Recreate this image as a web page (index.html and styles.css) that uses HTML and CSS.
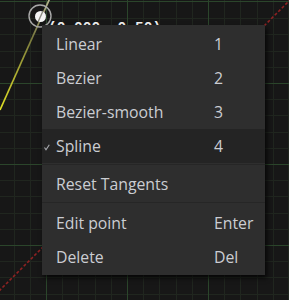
FILE: index.html
```html
<!DOCTYPE html>
<html lang="en">
<head>
	<meta charset="UTF-8">
	<title>Curve point menu</title>
<link rel="stylesheet" href="styles.css">
</head>
<body>
	<div class="editor">
		<svg class="graph" width="289" height="300" viewBox="0 0 289 300">
			<defs>
				<linearGradient id="curve" x1="0" y1="0" x2="0" y2="1">
					<stop offset="0" stop-color="#b8b890"/>
					<stop offset="0.35" stop-color="#7a7a40"/>
					<stop offset="1" stop-color="#e2e224"/>
				</linearGradient>
			</defs>
			<!-- minor grid -->
			<path class="grid_minor" d="M14.5 0V300M30.5 0V300M62.5 0V300M78.5 0V300M95.5 0V300M111.5 0V300M143.5 0V300M159.5 0V300M176.5 0V300M192.5 0V300M224.5 0V300M240.5 0V300M257.5 0V300M273.5 0V300M288.5 0V300
				M0 18.5H289M0 34.5H289M0 51.5H289M0 67.5H289M0 99.5H289M0 115.5H289M0 132.5H289M0 148.5H289M0 180.5H289M0 196.5H289M0 213.5H289M0 229.5H289M0 261.5H289M0 277.5H289M0 294.5H289"/>
			<!-- major grid -->
			<path class="grid_major" d="M46.5 0V300M127.5 0V300M208.5 0V300M0 1.5H289M0 83.5H289M0 164.5H289M0 245.5H289"/>

			<path class="dashed" d="M291 -1L-1 291"/>
			<path class="curve" d="M50 -2L0 110" stroke="url(#curve)"/>

			<circle class="ring" cx="40" cy="16" r="11"/>
			<circle class="dot" cx="40.5" cy="16.5" r="5.5"/>
			<path class="dot_line" d="M43 11L38 22"/>
		</svg>

		<!-- point value, mostly hidden under the menu -->
		<div class="coords_clip"><span class="coords">(0.000, 0.50)</span></div>

		<ul class="menu">
			<li class="item"><span class="label">Linear</span><span class="key">1</span></li>
			<li class="item"><span class="label">Bezier</span><span class="key">2</span></li>
			<li class="item"><span class="label">Bezier-smooth</span><span class="key">3</span></li>
			<li class="item active">
				<svg class="check" width="6" height="7" viewBox="0 0 6 7"><path d="M0.5 3.5L2 5.8L5.3 0.8"/></svg>
				<span class="label">Spline</span><span class="key">4</span>
			</li>
			<li class="sep"></li>
			<li class="item"><span class="label">Reset Tangents</span><span class="key"></span></li>
			<li class="sep sep_low"></li>
			<li class="item"><span class="label">Edit point</span><span class="key">Enter</span></li>
			<li class="item"><span class="label">Delete</span><span class="key">Del</span></li>
		</ul>
	</div>
</body>
</html>
```

FILE: styles.css
```css
*{margin: 0; padding: 0;}
li{list-style: none;}
html, body{
	width: 289px;
	height: 300px;
	overflow: hidden;
	background: #171717;
}
.editor{
	width: 289px;
	height: 300px;
	position: relative;
}
.graph{
	display: block;
}
.grid_minor{
	stroke: #20261f;
	stroke-width: 1;
	fill: none;
}
.grid_major{
	stroke: #2b452b;
	stroke-width: 1;
	fill: none;
}
.dashed{
	stroke: #8e2222;
	stroke-width: 1.6;
	stroke-dasharray: 3 2;
	fill: none;
}
.curve{
	stroke-width: 1.7;
	fill: none;
}
.ring{
	fill: none;
	stroke: #a8a8a8;
	stroke-width: 1.4;
}
.dot{
	fill: #f4f4f4;
}
.dot_line{
	stroke: #8a8a80;
	stroke-width: 1.4;
}
.coords_clip{
	position: absolute;
	top: 18px;
	left: 48px;
	width: 130px;
	height: 7px;
	overflow: hidden;
}
.coords{
	display: block;
	font: bold 14.5px/20px "Liberation Mono", monospace;
	color: #f2f2f2;
	white-space: nowrap;
}
.menu{
	position: absolute;
	top: 25px;
	left: 42px;
	width: 223px;
	padding: 2px 0 1px;
	background: #2e2e2e;
	box-shadow: 2px 3px 5px rgba(0, 0, 0, 0.75);
	font: 15.8px "Open Sans", "Noto Sans", sans-serif;
	color: #cbcdd2;
}
.item{
	height: 34px;
	display: flex;
	align-items: center;
	padding: 0 12px 0 14px;
	position: relative;
}
.item.active{
	background: #242424;
}
.label{
	flex: 1;
}
.key{
	width: 39px;
}
.check{
	position: absolute;
	left: 2px;
	top: 15px;
}
.check path{
	fill: none;
	stroke: #a9abb0;
	stroke-width: 1.1;
}
.sep{
	height: 1px;
	margin: 1px 0 2px;
	background: #262626;
}
.sep_low{
	margin: 1px 0 3px;
}
```
